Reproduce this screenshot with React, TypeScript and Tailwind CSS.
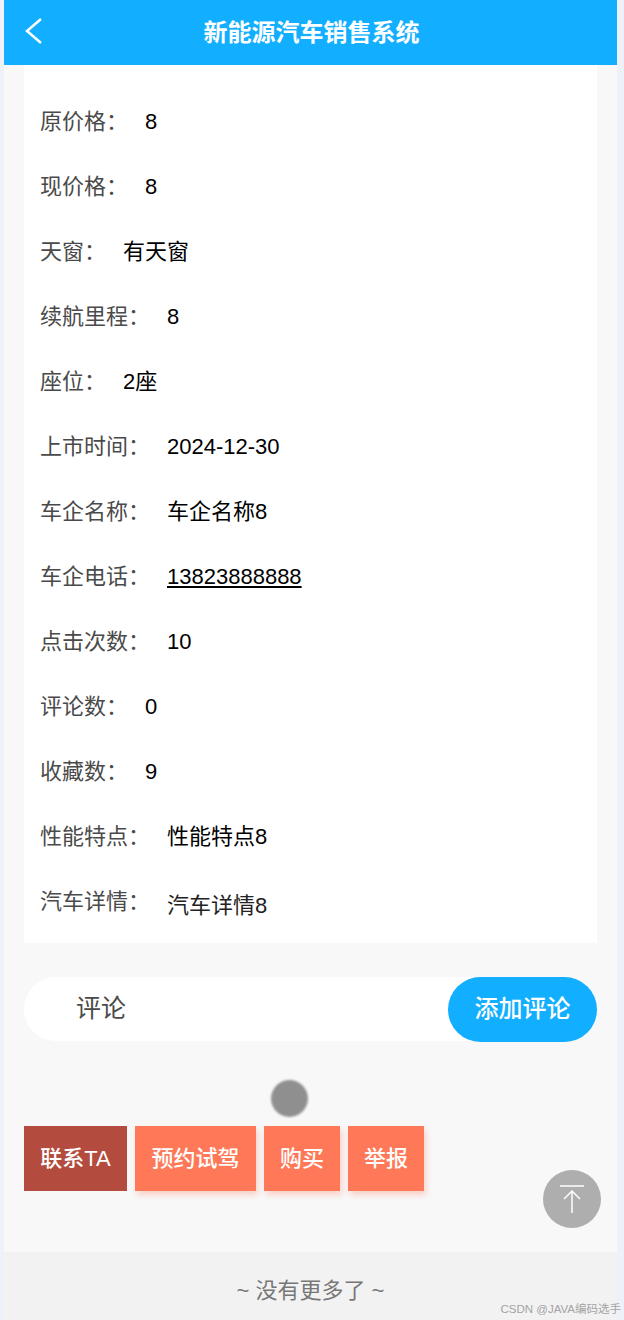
const rows = [
  { label: '原价格：', value: '8' },
  { label: '现价格：', value: '8' },
  { label: '天窗：', value: '有天窗' },
  { label: '续航里程：', value: '8' },
  { label: '座位：', value: '2座' },
  { label: '上市时间：', value: '2024-12-30' },
  { label: '车企名称：', value: '车企名称8' },
  { label: '车企电话：', value: '13823888888', link: true },
  { label: '点击次数：', value: '10' },
  { label: '评论数：', value: '0' },
  { label: '收藏数：', value: '9' },
  { label: '性能特点：', value: '性能特点8' },
];

const actions = [
  { text: '联系TA', cls: 'w-[103px] bg-[#b34c3e]' },
  { text: '预约试驾', cls: 'w-[121px] bg-[#ff7858] shadow-[2px_4px_6px_rgba(255,118,86,0.3)]' },
  { text: '购买', cls: 'w-[76px] bg-[#ff7858] shadow-[2px_4px_6px_rgba(255,118,86,0.3)]' },
  { text: '举报', cls: 'w-[76px] bg-[#ff7858] shadow-[2px_4px_6px_rgba(255,118,86,0.3)]' },
];

export default function App() {
  return (
    <div className="relative h-[1320px] w-[624px] overflow-hidden bg-[#eef1f8] font-['Liberation_Sans','Noto_Sans_CJK_SC',sans-serif]">
      <div className="ml-[4px] flex h-full w-[613px] flex-col bg-[#f8f8f9]">
        <header className="relative flex h-[65px] shrink-0 items-center justify-center bg-[#12aeff]">
          <svg className="absolute left-[20px] top-[17px]" width="20" height="28" viewBox="0 0 20 28" fill="none" stroke="white" strokeWidth="2.5">
            <path d="M17 2L3 14l14 12" />
          </svg>
          <h1 className="pl-[2px] text-[24px] font-bold text-white">新能源汽车销售系统</h1>
        </header>

        <section className="mx-[20px] bg-white pl-[16px] pt-[24px] pb-[9px]">
          {rows.map(r => (
            <div key={r.label} className="flex h-[65px] items-center text-[22px]">
              <span className="mr-[17px] text-[#4a4a4a]">{r.label}</span>
              <span className={r.link ? 'text-black underline underline-offset-2' : 'text-black'}>{r.value}</span>
            </div>
          ))}
          <div className="flex h-[65px] items-center text-[22px]">
            <span className="mr-[17px] text-[#4a4a4a]">汽车详情：</span>
            <span className="mt-[8px] text-[#222]">汽车详情8</span>
          </div>
        </section>

        <div className="mx-[20px] mt-[34px] flex h-[64px] items-center justify-between rounded-[32px] bg-white">
          <span className="pl-[52px] text-[25px] text-[#4a4a4a]">评论</span>
          <button className="h-[65px] w-[149px] rounded-[33px] bg-[#12aeff] text-[24px] font-medium text-white">添加评论</button>
        </div>

        <div className="mx-[20px] mt-[85px] flex gap-[8px]">
          {actions.map(a => (
            <button key={a.text} className={`h-[65px] text-[22px] font-medium text-white ${a.cls}`}>{a.text}</button>
          ))}
        </div>

        <footer className="mt-auto flex h-[68px] items-center justify-center bg-[#f2f2f3] pt-[8px] text-[22px] text-[#777]">
          ~ 没有更多了 ~
        </footer>
      </div>

      <div className="absolute left-[271px] top-[1080px] h-[37px] w-[37px] rounded-full bg-[#8f8f8f] blur-[1px]" />
      <div className="absolute left-[543px] top-[1170px] flex h-[58px] w-[58px] items-center justify-center rounded-full bg-[#aeaeae]">
        <svg width="24" height="28" viewBox="0 0 24 28" fill="none" stroke="white" strokeWidth="1.5">
          <path d="M0 1h24" />
          <path d="M12 28V6" />
          <path d="M4 14l8-8 8 8" />
        </svg>
      </div>
      <span className="absolute right-[3px] top-[1301px] text-[11.5px] text-[#a3a3a3]">CSDN @JAVA编码选手</span>
    </div>
  );
}
